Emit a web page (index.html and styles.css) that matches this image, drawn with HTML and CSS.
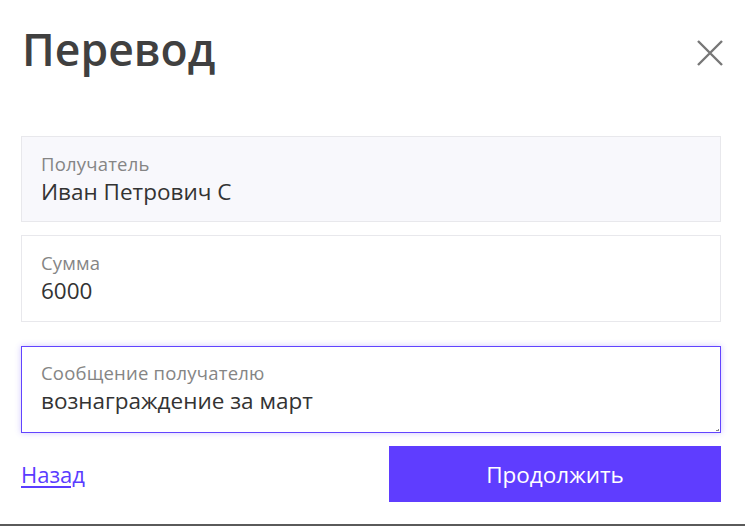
FILE: index.html
```html
<!DOCTYPE html>
<html lang="ru">
<head>
<meta charset="utf-8">
<title>Перевод</title>
<link rel="stylesheet" href="styles.css">
</head>
<body>
<div class="modal">
  <header class="head">
    <h1 class="title">Перевод</h1>
    <button class="close" aria-label="Закрыть">
      <svg width="26" height="26" viewBox="0 0 26 26"><path d="M1 1L25 25M25 1L1 25" stroke="#777" stroke-width="2.4" fill="none"/></svg>
    </button>
  </header>
  <div class="fields">
    <div class="field field-readonly">
      <span class="label">Получатель</span>
      <span class="value">Иван Петрович С</span>
    </div>
    <div class="field">
      <span class="label">Сумма</span>
      <span class="value">6000</span>
    </div>
    <div class="field field-focus">
      <span class="label">Сообщение получателю</span>
      <span class="value">вознаграждение за март</span>
      <span class="grip"></span>
    </div>
  </div>
  <footer class="actions">
    <a href="#" class="back">Назад</a>
    <button class="primary">Продолжить</button>
  </footer>
</div>
<div class="bottom-line"></div>
</body>
</html>
```
FILE: styles.css
```css
html, body {
  margin: 0;
  padding: 0;
  background: #fff;
  font-family: "Open Sans", "Noto Sans", sans-serif;
  color: #333;
}
.modal {
  height: 524px;
  box-sizing: border-box;
  padding: 0 24px 0 21px;
  display: flex;
  flex-direction: column;
}
.head {
  height: 136px;
  display: flex;
  justify-content: space-between;
  align-items: flex-start;
}
.title {
  margin: 18px 0 0 1px;
  font-size: 44.5px;
  font-weight: 600;
  color: #404040;
  line-height: 62px;
}
.close {
  margin: 40px -2px 0 0;
  padding: 0;
  border: 0;
  background: none;
  width: 26px;
  height: 26px;
  display: flex;
}
.fields {
  display: flex;
  flex-direction: column;
}
.field {
  position: relative;
  box-sizing: border-box;
  height: 87px;
  border: 1px solid #e8e8ec;
  background: #fff;
  padding: 15px 19px 0 19px;
  display: flex;
  flex-direction: column;
  margin-bottom: 13px;
}
.field-readonly {
  background: #f8f8fc;
  height: 86px;
}
.field:nth-child(2) {
  margin-bottom: 24px;
}
.field-focus {
  border: 1.5px solid #6244ff;
  box-shadow: 0 0 6px rgba(98, 68, 255, 0.3);
  height: 87px;
  padding-top: 14px;
}
.label {
  font-size: 18.5px;
  letter-spacing: 0.2px;
  color: #858585;
  line-height: 24px;
}
.value {
  font-size: 22.5px;
  color: #333;
  line-height: 31px;
}
.grip {
  position: absolute;
  right: 1px;
  bottom: 1px;
  width: 3px;
  height: 3px;
  background: linear-gradient(135deg, transparent 50%, #888 50%);
}
.actions {
  display: flex;
  justify-content: space-between;
  align-items: center;
  height: 56px;
}
.back {
  font-size: 22px;
  color: #5a3cff;
  text-decoration: underline;
  text-underline-offset: 3px;
}
.primary {
  width: 332px;
  height: 56px;
  border: 0;
  background: #5f3dff;
  color: #fff;
  font-family: inherit;
  font-size: 22.5px;
  padding: 0;
}
.bottom-line {
  height: 2px;
  background: #5a5a5a;
}
```
